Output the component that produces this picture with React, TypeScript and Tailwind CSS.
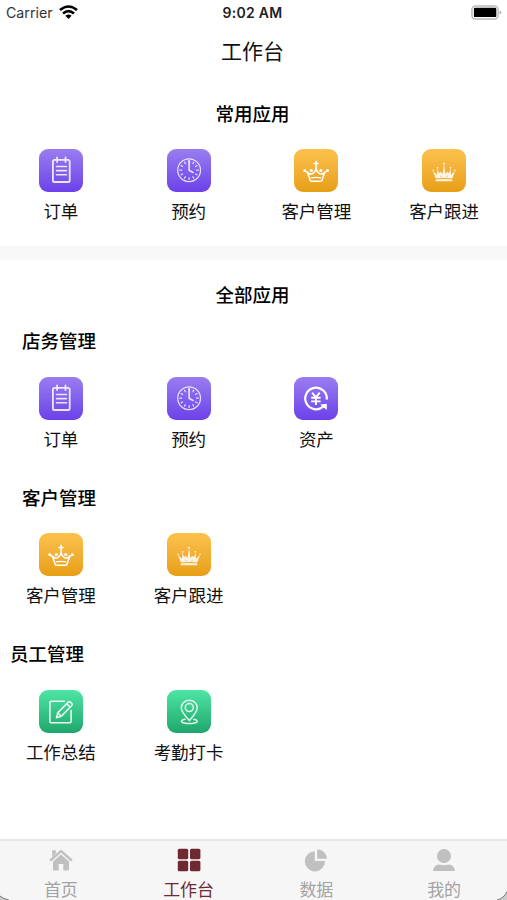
import type { ReactNode } from 'react'

type Tone = 'purple' | 'amber' | 'green'

interface AppItem {
  label: string
  tone:  Tone
  icon:  ReactNode
}

interface Group {
  title:   string
  heading: string
  items:   AppItem[]
}

const tones: Record<Tone, string> = {
  purple: 'from-[#9a7cf0] to-[#6d3fe9]',
  amber:  'from-[#fcc14c] to-[#e89f13]',
  green:  'from-[#4de6a5] to-[#1fa66c]',
}

// All tile glyphs are drawn on the 43px tile itself
function Glyph({ children, width = 1.6 }: { children: ReactNode; width?: number }) {
  return (
    <svg
      viewBox="0 0 43 43"
      className="block size-full"
      fill="none"
      stroke="#fff"
      strokeWidth={width}
      strokeLinecap="round"
      strokeLinejoin="round"
    >
      {children}
    </svg>
  )
}

const clockTicks = Array.from({ length: 12 }, (_, i) => i * 30)

const orderIcon = (
  <Glyph width={1.8}>
    <g opacity=".85">
      <rect x="13.4" y="10.8" width="16.8" height="22.2" rx="1.6" />
      <path d="M17.6 8.4v4.6M26 8.4v4.6" />
      <path d="M17 17.5h10M17 21.6h10M17 25.8h10" strokeWidth="1.6" />
    </g>
  </Glyph>
)

const clockIcon = (
  <Glyph width={1.2}>
    <g opacity=".82">
      <circle cx="21.6" cy="21.2" r="11.4" />
      {clockTicks.map(angle => (
        <path key={angle} d="M21.6 12v1.7" transform={`rotate(${angle} 21.6 21.2)`} />
      ))}
      <path d="M21.6 11.5v9.7l3.9 2.3" strokeWidth="1.6" />
    </g>
  </Glyph>
)

const crownIcon = (
  <Glyph width={1.5}>
    <path d="M21.6 12.2v7.4M19.5 14.6h4.2" />
    <path d="M10.2 21.8l2.8 1.6 3 8.6q5.600.6 11.200 0l3-8.600 2.800-1.600M13 23.400q2.600 2.600 5.200 1.200 2.700-1.400 3.400-5 .7 3.600 3.400 5 2.600 1.400 5.200-1.200" />
    <path d="M17 28.900q4.600-1 9.200 0" strokeWidth="1.200" />
    <g fill="#fff" stroke="none">
      <circle cx="10.2" cy="21.700" r="1.400" />
      <circle cx="16.900" cy="21.500" r="1.600" />
      <circle cx="26.300" cy="21.500" r="1.600" />
      <circle cx="33" cy="21.700" r="1.400" />
    </g>
  </Glyph>
)

const crownSolidIcon = (
  <Glyph>
    <g opacity=".88" fill="#fff" stroke="none">
      <path d="M13.300 29.600l-2.900-7.800 4 3.900.7-6.400 1.300 4.900 1.700-1.400 2 2.200 1.400-10.500 1.400 10.500 2-2.200 1.700 1.400 1.300-4.900.7 6.400 4.100-3.900-2.900 7.800q-8.200-1-16.500 0z" />
      <path d="M13.300 30.400q8.200-1 16.500 0v1.900H13.300z" />
      <circle cx="10.600" cy="21.300" r=".8" />
      <circle cx="15.100" cy="18.800" r=".9" />
      <circle cx="21.500" cy="14.800" r="1" />
      <circle cx="27.900" cy="18.800" r=".9" />
      <circle cx="32.500" cy="21.300" r=".8" />
    </g>
    <path d="M18.300 27l.3 1.200M24.700 27l-.3 1.200" stroke="#f2b035" strokeWidth=".7" />
  </Glyph>
)

const assetIcon = (
  <Glyph width={2.2}>
    <g strokeLinecap="butt">
      <path d="M32.300 22.500a10.800 10.800 0 1 0-3.400 6.900" />
      <path d="M25.600 27.400l6.700-.6v6.200z" fill="#fff" stroke="none" />
      <path d="M17.600 15.600l3.800 4.800 3.800-4.800M21.400 20.400v7.600M16.700 20.800h9.400M16.700 24.400h9.400" strokeWidth="1.9" />
    </g>
  </Glyph>
)

const summaryIcon = (
  <Glyph width={1.6}>
    <g opacity=".9">
      <path d="M24.800 11.200H11.600q-1.200 0-1.200 1.200v19.200q0 1.200 1.200 1.200h18.800q1.200 0 1.200-1.200V20.600" />
      <path d="M17 27.700l1.200-4.800L28.600 12.200q1.200-1.200 2.400 0l1.100 1.100q1.100 1.200 0 2.400L21.800 26.200zM27.200 13.800l3.300 3.300M18.500 23l3 3" />
    </g>
  </Glyph>
)

const checkInIcon = (
  <Glyph width={1.5}>
    <g opacity=".85">
      <path d="M21.800 30.600q-8-9-8-12.700a8 7.700 0 0 1 16 0q0 3.700-8 12.700z" />
      <circle cx="21.800" cy="17.600" r="4" />
      <path d="M17.500 29.200c-6 1.100-4.500 4.400 4.300 4.400s10.300-3.300 4.300-4.400" />
    </g>
  </Glyph>
)

const order:    AppItem = { label: '订单', tone: 'purple', icon: orderIcon }
const booking:  AppItem = { label: '预约', tone: 'purple', icon: clockIcon }
const asset:    AppItem = { label: '资产', tone: 'purple', icon: assetIcon }
const customer: AppItem = { label: '客户管理', tone: 'amber', icon: crownIcon }
const followUp: AppItem = { label: '客户跟进', tone: 'amber', icon: crownSolidIcon }
const summary:  AppItem = { label: '工作总结', tone: 'green', icon: summaryIcon }
const checkIn:  AppItem = { label: '考勤打卡', tone: 'green', icon: checkInIcon }

const favourites = [order, booking, customer, followUp]

const groups: Group[] = [
  { title: '店务管理', heading: 'pl-[22px]', items: [order, booking, asset] },
  { title: '客户管理', heading: 'pl-[22px]', items: [customer, followUp] },
  { title: '员工管理', heading: 'pl-[10px]', items: [summary, checkIn] },
]

const tabs = [
  {
    label: '首页',
    icon: (
      <g>
        <path d="M1.8 12L12 3l10.200 9" fill="none" stroke="currentColor" strokeWidth="2.4" strokeLinecap="round" />
        <path d="M3.200 2.300h3.600v3.400L3.200 8.800z" />
        <path d="M12 6.400l8 7V21.500q0 1-1 1h-4.700v-6.500H9.700v6.500H5q-1 0-1-1v-8.100z" />
      </g>
    ),
  },
  {
    label: '工作台',
    active: true,
    icon: (
      <g>
        <rect x=".8" y=".8" width="10.4" height="10.4" rx="1.5" />
        <rect x="13" y=".8" width="10.4" height="10.4" rx="1.5" />
        <rect x=".8" y="12.8" width="10.4" height="10.4" rx="1.5" />
        <rect x="13" y="12.8" width="10.4" height="10.4" rx="1.5" />
      </g>
    ),
  },
  {
    label: '数据',
    icon: (
      <g>
        <path d="M10.800 3.200v9.900h10.200A10.100 10.100 0 1 1 10.800 3.200z" />
        <path d="M13.200 1.200a9.800 9.800 0 0 1 9.800 9.600h-9.800z" />
      </g>
    ),
  },
  {
    label: '我的',
    icon: (
      <g>
        <circle cx="12" cy="8" r="7" />
        <path d="M.9 22.900q1.200-6.300 6.200-6.500 4.900 1.600 9.800 0 5 .2 6.200 6.500z" />
      </g>
    ),
  },
]

export default function App() {
  return (
    <div className="relative flex h-[900px] w-[507px] flex-col overflow-hidden bg-white font-['Inter','Noto_Sans_CJK_SC',sans-serif] text-[#111]">
      <StatusBar />

      <header className="flex h-[52px] shrink-0 items-center justify-center pr-[2px] text-[21px] leading-none">
        工作台
      </header>

      <main className="flex grow flex-col">
        <section className="h-[169px]">
          <SectionTitle className="h-[72px] pt-[2px]">常用应用</SectionTitle>
          <AppGrid items={favourites} />
        </section>

        <div className="h-[14px] bg-[#f8f8f8]" />

        <section>
          <SectionTitle className="h-[69px] pt-[2px]">全部应用</SectionTitle>
          {groups.map(group => (
            <div key={group.title} className="h-[156.5px]">
              <h3 className={`flex h-[25px] items-center text-[18.5px] font-medium leading-none text-black ${group.heading}`}>
                {group.title}
              </h3>
              <div className="pt-[22.5px]">
                <AppGrid items={group.items} />
              </div>
            </div>
          ))}
        </section>
      </main>

      <TabBar />
    </div>
  )
}

function SectionTitle({ children, className }: { children: ReactNode; className: string }) {
  return (
    <h2 className={`flex items-center justify-center pr-[2px] text-[18.5px] font-medium leading-none text-black ${className}`}>
      {children}
    </h2>
  )
}

function StatusBar() {
  return (
    <div className="grid h-[25px] shrink-0 grid-cols-3 items-center px-[6px] text-[14.2px] leading-none">
      <div className="flex items-center gap-[6px] pt-px text-[#333]">
        <span>Carrier</span>
        <svg className="mb-[2px]" width="19" height="14" viewBox="0 0 19 14" fill="none" stroke="#000" strokeWidth="2.6">
          <path d="M1 5.100q8.500-7.200 17 0M4 8.400q5.500-4.600 11 0" />
          <path d="M6.400 10.700q3.100-2.500 6.200 0L9.500 13.900z" fill="#000" stroke="none" />
        </svg>
      </div>
      <div className="pr-[2px] pt-px text-center text-[14px] font-semibold tracking-[0.3px] text-[#222]">9:02 AM</div>
      <svg className="-mr-px mb-px justify-self-end" width="31" height="15" viewBox="0 0 31 15">
        <rect x=".9" y=".9" width="26.2" height="13" rx="3.6" fill="#fff" stroke="#bbb" strokeWidth="1.5" />
        <rect x="2.9" y="2.7" width="22.4" height="9.4" rx="1.2" fill="#000" />
        <path d="M28.600 5.400q1.600.6 1.600 2t-1.600 2z" fill="#aaa" />
      </svg>
    </div>
  )
}

function AppGrid({ items }: { items: AppItem[] }) {
  return (
    <div className="-ml-[3px] grid w-[511px] grid-cols-4">
      {items.map(({ label, tone, icon }) => (
        <div key={label} className="flex flex-col items-center">
          <div className={`h-[43px] w-[44px] overflow-hidden rounded-[9px] bg-linear-to-b ${tones[tone]}`}>{icon}</div>
          <span className="mt-[11px] text-[17.5px] leading-[18px]">{label}</span>
        </div>
      ))}
    </div>
  )
}

function TabBar() {
  return (
    <nav className="relative h-[61px] shrink-0 border-t-2 border-[#e6e6e6] bg-[#f6f6f6]">
      <div className="-ml-[3px] grid w-[511px] grid-cols-4 pt-[7px]">
        {tabs.map(({ label, icon, active }) => (
          <div
            key={label}
            className={`flex flex-col items-center ${active ? 'text-[#6e2a30]' : 'text-[#a3a3a3]'}`}
          >
            <svg className={active ? '' : 'text-[#c0c0c0]'} width="24" height="24" viewBox="0 0 24 24" fill="currentColor">
              {icon}
            </svg>
            <span className="mt-[9px] text-[17px] leading-[18px]">{label}</span>
          </div>
        ))}
      </div>

      {/* Rounded screen corners */}
      <svg className="absolute bottom-0 left-0" width="12" height="6" viewBox="0 0 12 6">
        <path d="M0 2q3 3 9 4H0z" fill="#ccc" />
        <path d="M0 2q3 3 9 4" fill="none" stroke="#777" />
      </svg>
      <svg className="absolute bottom-0 right-0" width="14" height="10" viewBox="0 0 14 10">
        <path d="M14 1.500q-3 7-10 8.500h10z" fill="#ccc" />
        <path d="M14 1.500q-3 7-10 8.500" fill="none" stroke="#777" />
      </svg>
    </nav>
  )
}
